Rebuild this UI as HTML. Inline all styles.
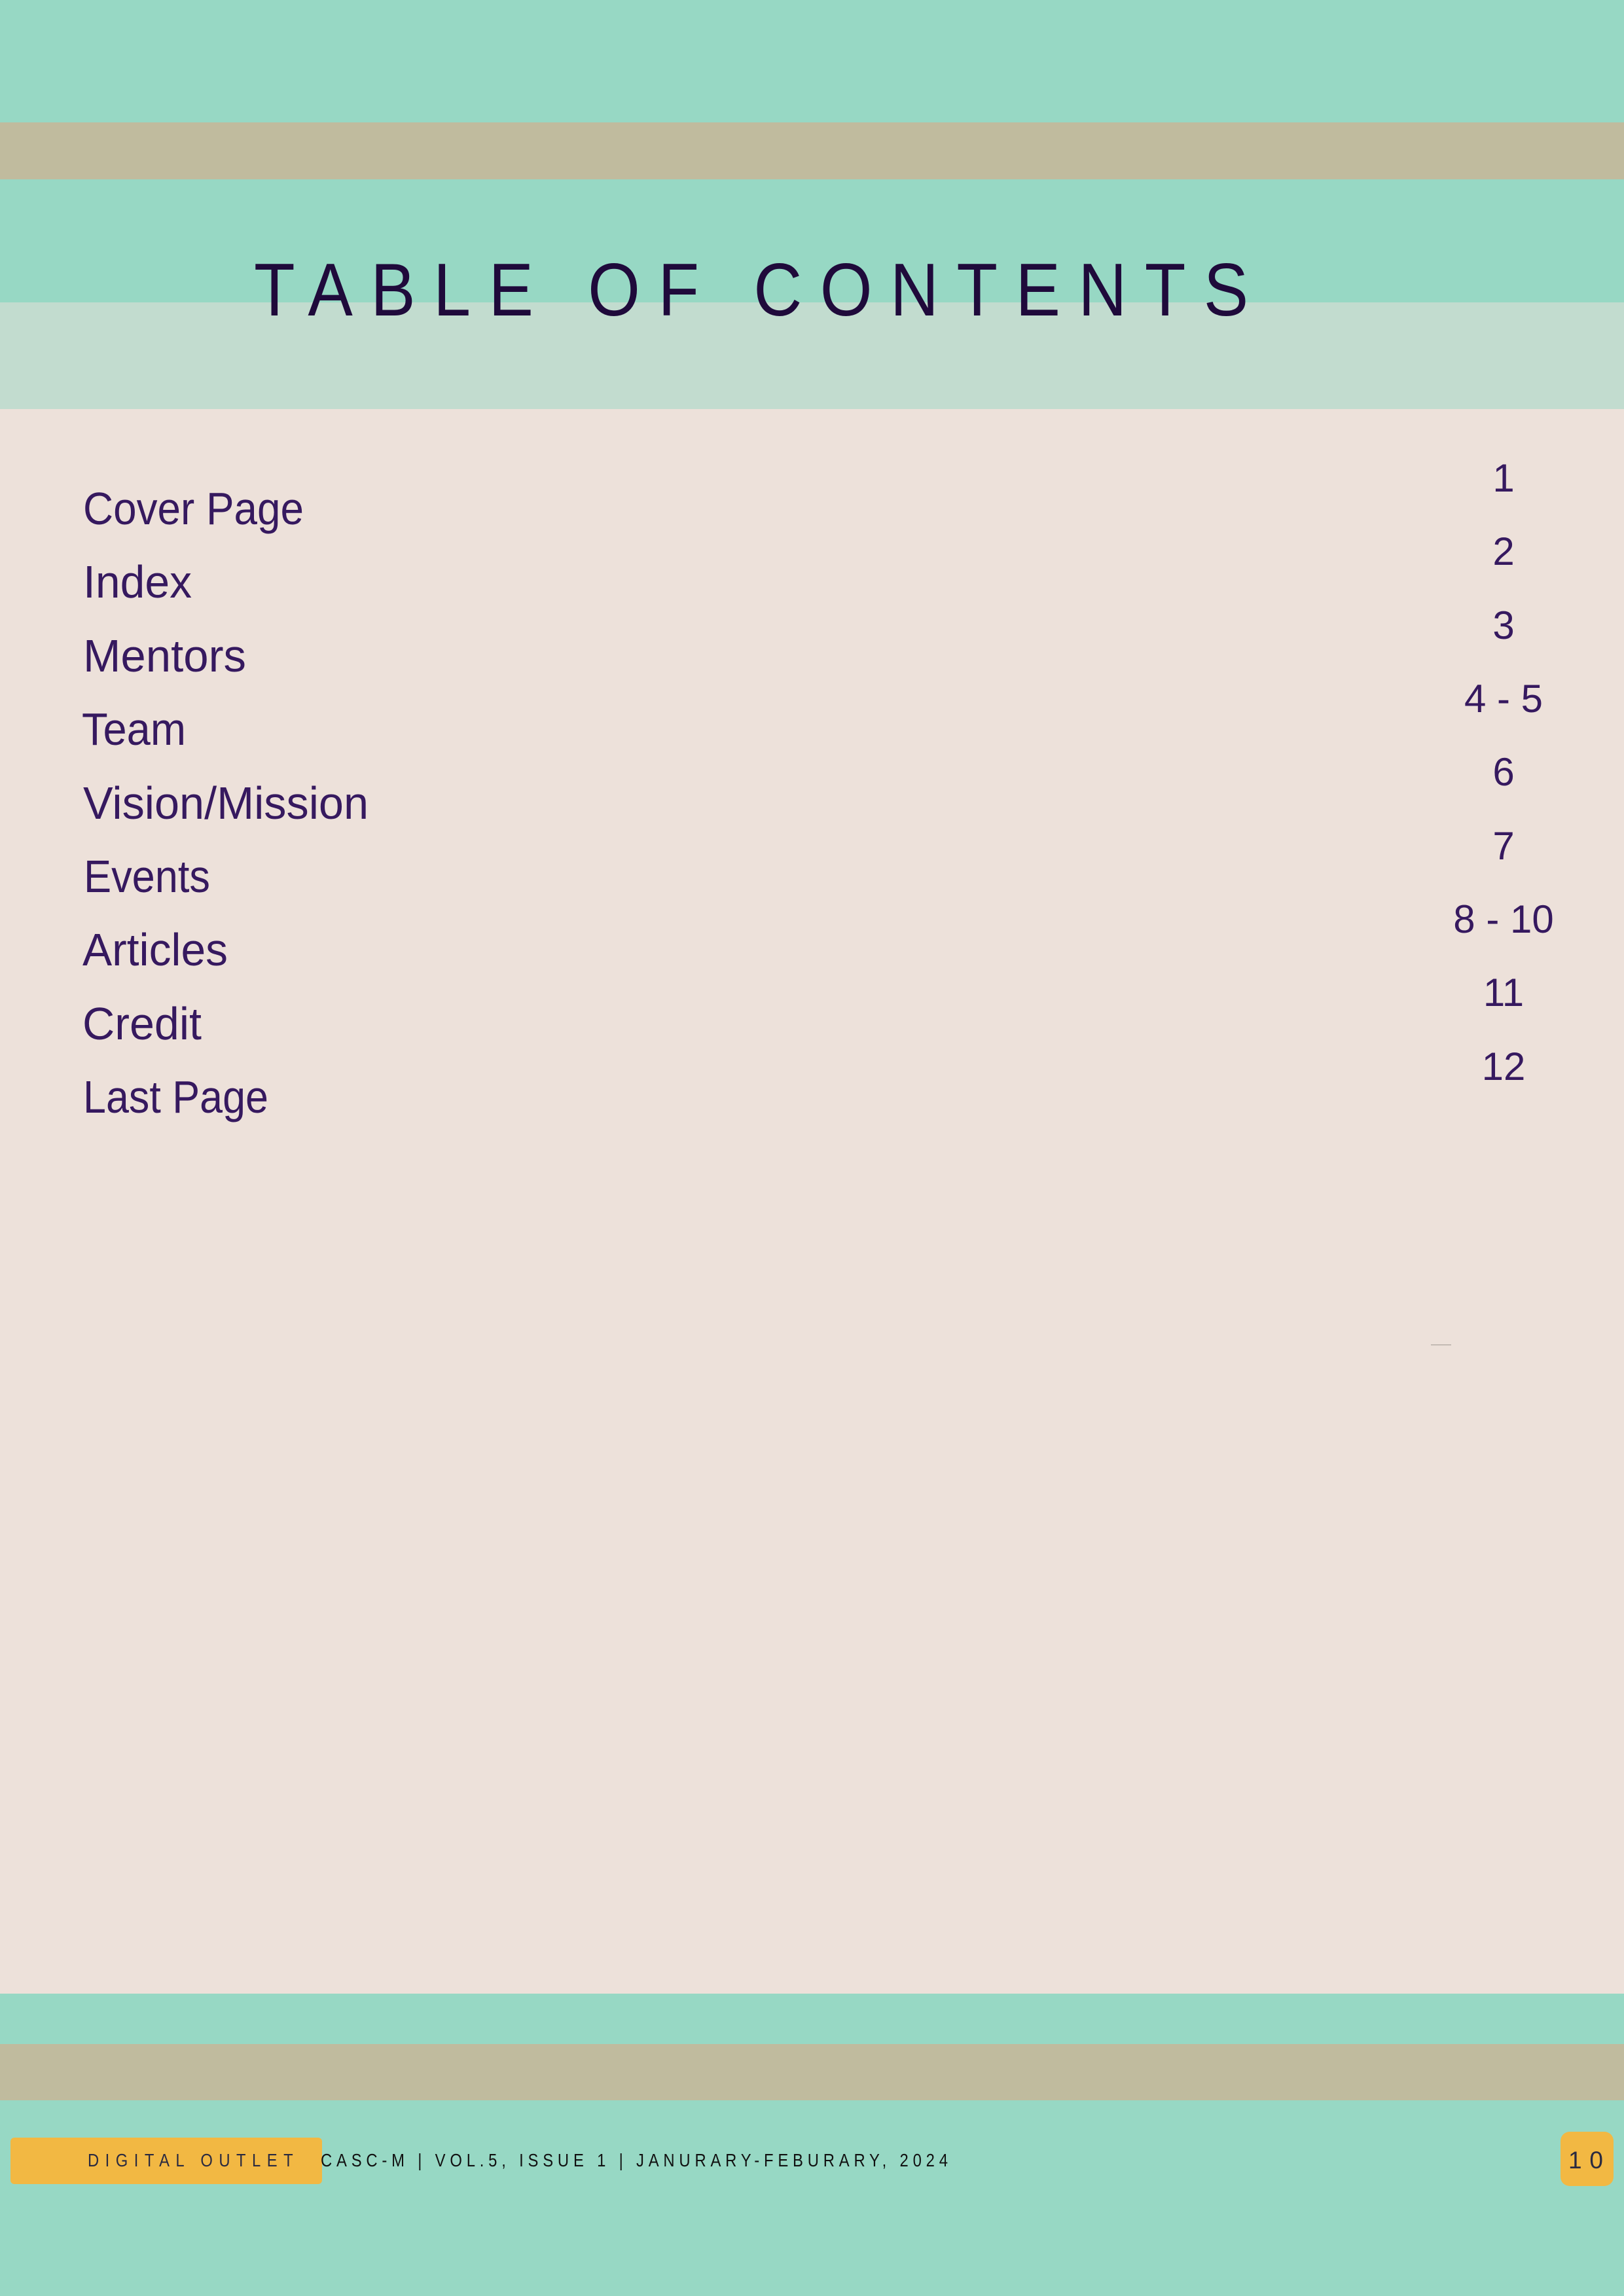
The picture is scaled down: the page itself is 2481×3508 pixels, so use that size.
<!DOCTYPE html>
<html><head><meta charset="utf-8">
<style>
html,body{margin:0;padding:0;}
body{width:2481px;height:3508px;position:relative;background:#ede1da;overflow:hidden;font-family:"Liberation Sans",sans-serif;}
.b{position:absolute;left:0;width:2481px;}
svg{position:absolute;left:0;top:0;}
</style></head><body>
<div class="b" style="top:0;height:187px;background:#97d8c4"></div>
<div class="b" style="top:187px;height:87px;background:#c0bb9e"></div>
<div class="b" style="top:274px;height:188px;background:#97d8c4"></div>
<div class="b" style="top:462px;height:163px;background:#c2dccf"></div>
<div class="b" style="top:3046px;height:77px;background:#97d8c4"></div>
<div class="b" style="top:3123px;height:86px;background:#c0bb9e"></div>
<div class="b" style="top:3209px;height:299px;background:#97d8c4"></div>
<svg width="2481" height="3508" xmlns="http://www.w3.org/2000/svg" font-family="Liberation Sans, sans-serif">
<g transform="translate(388,482) scale(0.9,1)">
<text x="0" y="0" font-size="114" fill="#1f0a3b" textLength="1688" lengthAdjust="spacing">TABLE OF CONTENTS</text>
</g>
<g fill="#36195f" font-size="70">
<text x="127" y="801" textLength="337" lengthAdjust="spacingAndGlyphs">Cover Page</text>
<text x="127" y="913" textLength="166" lengthAdjust="spacingAndGlyphs">Index</text>
<text x="127" y="1026" textLength="249" lengthAdjust="spacingAndGlyphs">Mentors</text>
<text x="125" y="1138" textLength="159" lengthAdjust="spacingAndGlyphs">Team</text>
<text x="127" y="1251" textLength="436" lengthAdjust="spacingAndGlyphs">Vision/Mission</text>
<text x="128" y="1363" textLength="193" lengthAdjust="spacingAndGlyphs">Events</text>
<text x="126" y="1475" textLength="222" lengthAdjust="spacingAndGlyphs">Articles</text>
<text x="126" y="1588" textLength="182" lengthAdjust="spacingAndGlyphs">Credit</text>
<text x="127" y="1700" textLength="283" lengthAdjust="spacingAndGlyphs">Last Page</text>
</g>
<g fill="#36195f" font-size="60" text-anchor="middle">
<text x="2297" y="751">1</text>
<text x="2297" y="863">2</text>
<text x="2297" y="976">3</text>
<text x="2297" y="1088">4 - 5</text>
<text x="2297" y="1200">6</text>
<text x="2297" y="1313">7</text>
<text x="2297" y="1425">8 - 10</text>
<text x="2297" y="1537">11</text>
<text x="2297" y="1650">12</text>
</g>
<rect x="2186" y="2054" width="31" height="1.5" fill="#b8aea8"/>
<rect x="16" y="3266" width="476" height="71" rx="6" fill="#f2b843"/>
<rect x="2384" y="3257" width="81" height="83" rx="14" fill="#f2b843"/>
<g transform="translate(134,3310) scale(0.85,1)">
<text x="0" y="0" font-size="28" fill="#2a2a40" textLength="369" lengthAdjust="spacing">DIGITAL OUTLET</text>
</g>
<g transform="translate(490,3310) scale(0.85,1)">
<text x="0" y="0" font-size="28" fill="#111" textLength="1127" lengthAdjust="spacing">CASC-M | VOL.5, ISSUE 1 | JANURARY-FEBURARY, 2024</text>
</g>
<text x="2396" y="3313" font-size="37" fill="#2a2a40" textLength="53" lengthAdjust="spacing">10</text>
</svg>
</body></html>
